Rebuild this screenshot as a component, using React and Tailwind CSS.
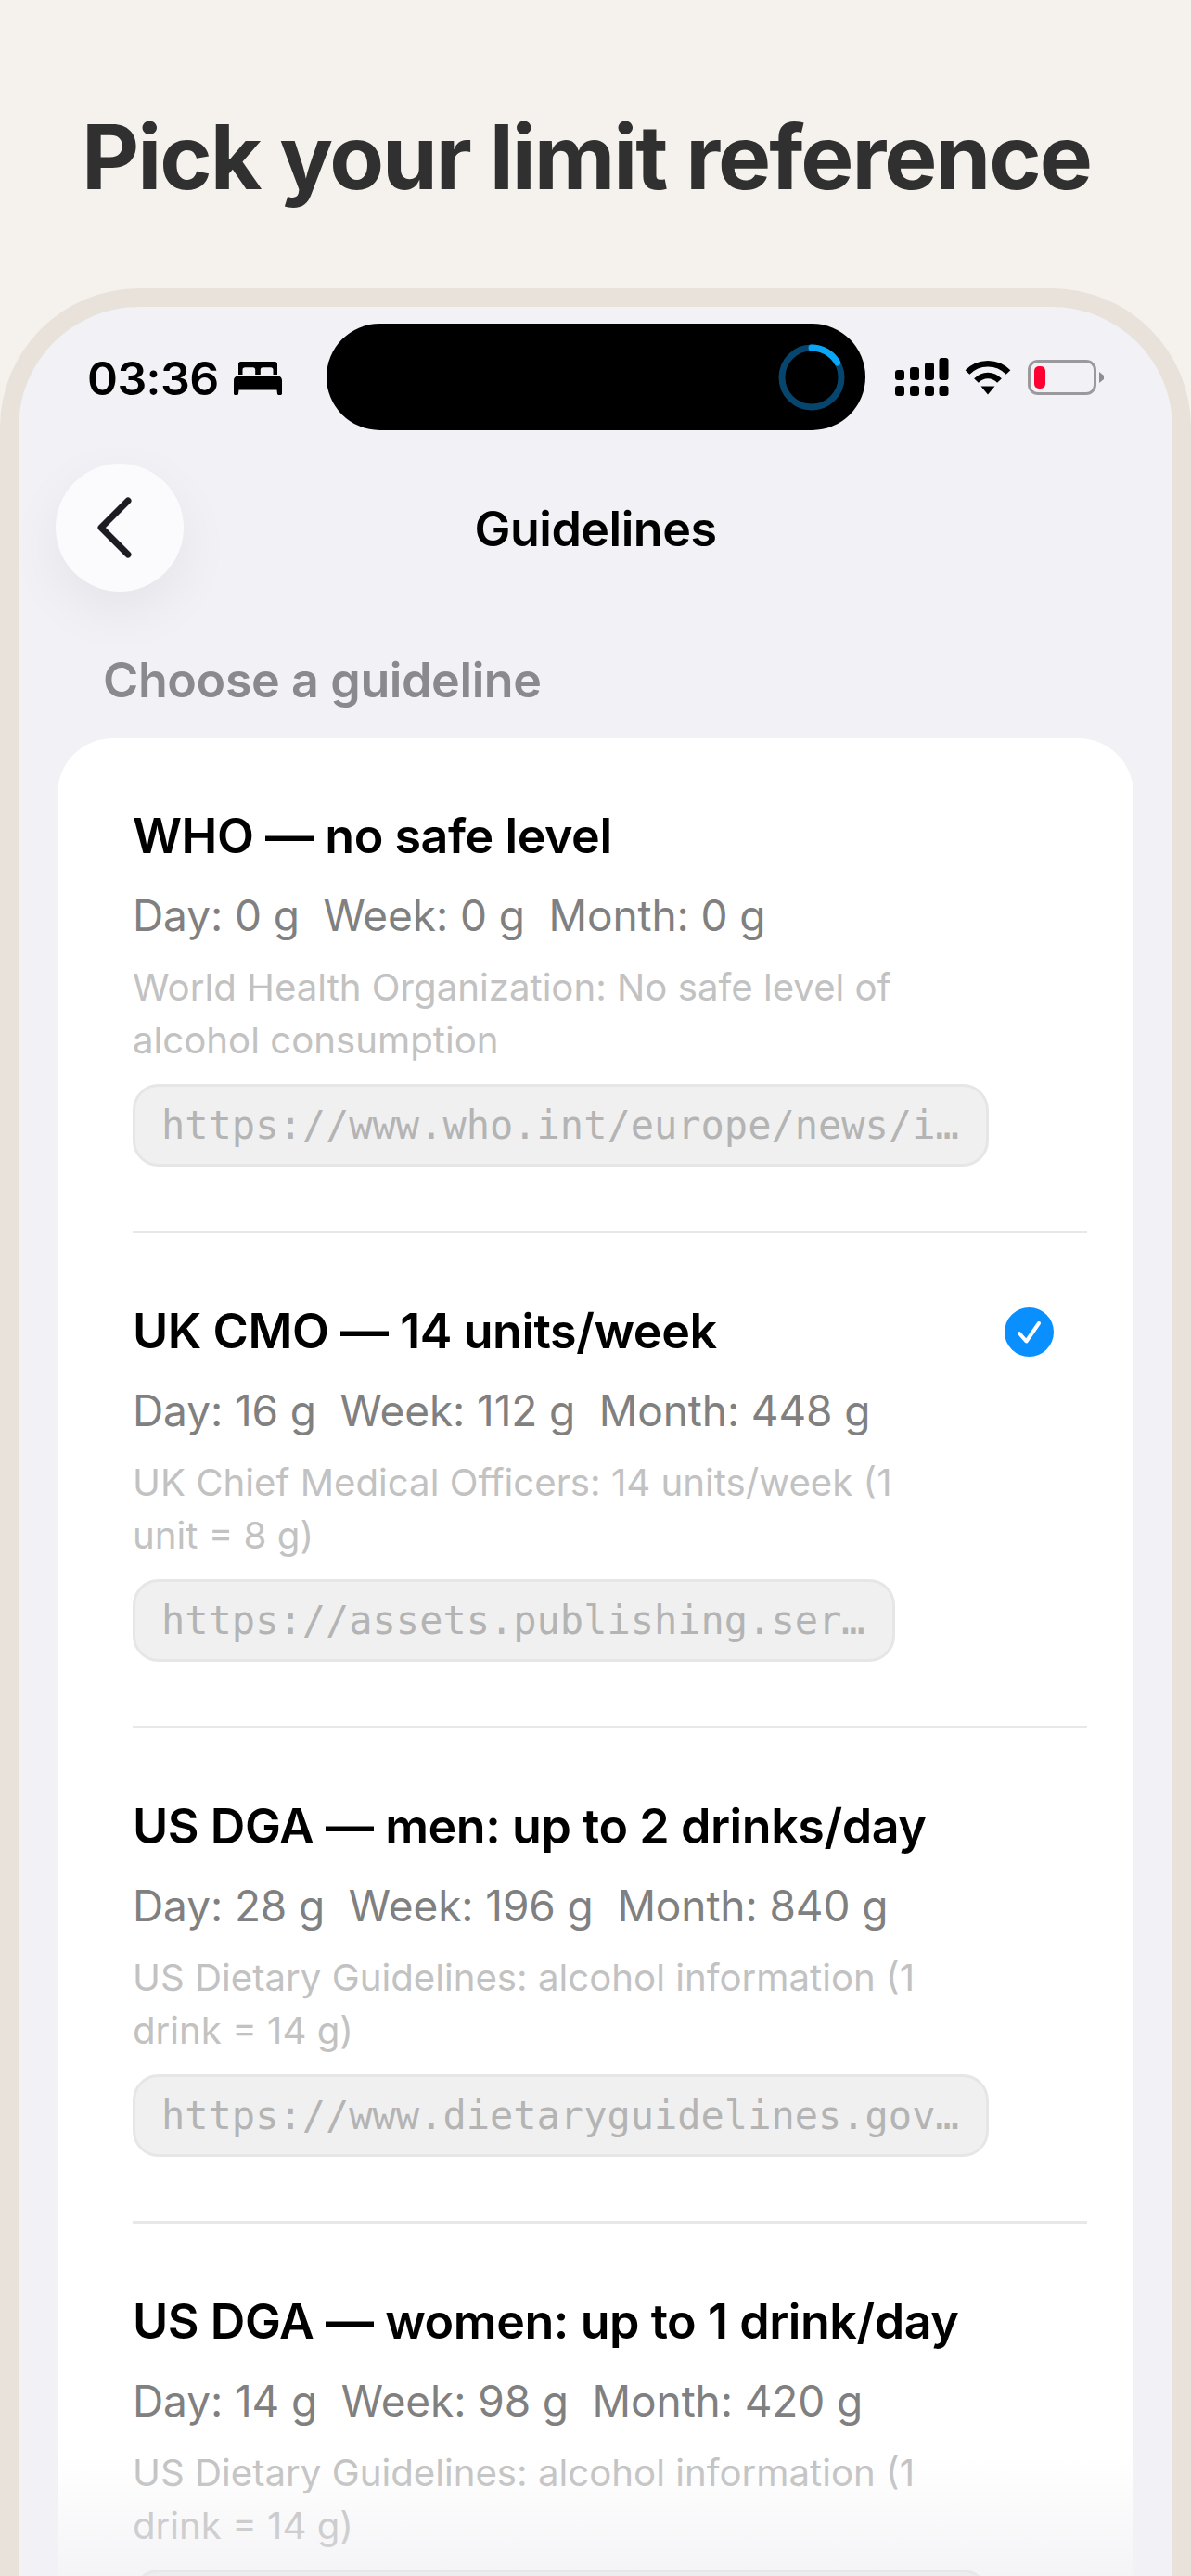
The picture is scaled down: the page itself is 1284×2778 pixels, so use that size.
const guidelines = [
	{
		title: "WHO — no safe level",
		stats: "Day: 0 g  Week: 0 g  Month: 0 g",
		desc: ["World Health Organization: No safe level of", "alcohol consumption"],
		url: "https://www.who.int/europe/news/i…",
	},
	{
		title: "UK CMO — 14 units/week",
		stats: "Day: 16 g  Week: 112 g  Month: 448 g",
		desc: ["UK Chief Medical Officers: 14 units/week (1", "unit = 8 g)"],
		url: "https://assets.publishing.ser…",
		selected: true,
	},
	{
		title: "US DGA — men: up to 2 drinks/day",
		stats: "Day: 28 g  Week: 196 g  Month: 840 g",
		desc: ["US Dietary Guidelines: alcohol information (1", "drink = 14 g)"],
		url: "https://www.dietaryguidelines.gov…",
	},
	{
		title: "US DGA — women: up to 1 drink/day",
		stats: "Day: 14 g  Week: 98 g  Month: 420 g",
		desc: ["US Dietary Guidelines: alcohol information (1", "drink = 14 g)"],
		url: "https://www.dietaryguidelines.gov…",
	},
];

function BedIcon() {
	return (
		<svg width="52" height="36" viewBox="0 0 52 36" fill="#000">
			<path d="M5 2.500C5 1 6.200 0 7.600 0h36.800C45.800 0 47 1 47 2.500V14h-4.500V8.800c0-1.600-1-2.600-2.600-2.600h-8.600c-1.600 0-2.500 1-2.500 2.600V14h-5.600V8.800c0-1.600-1-2.600-2.500-2.600h-8.600c-1.600 0-2.600 1-2.600 2.600V14H5z" />
			<path d="M4.500 15.500h43c2.400 0 4.500 1.800 4.500 4.500v14.600c0 .8-.6 1.400-1.400 1.400h-2.200c-.8 0-1.300-.5-1.400-1.200l-.5-4.300H5.500L5 34.800c-.1.700-.6 1.200-1.400 1.200H1.400C.6 36 0 35.400 0 34.600V20c0-2.700 2.100-4.500 4.500-4.500z" />
		</svg>
	);
}

function SignalIcon() {
	return (
		<svg width="58" height="42" viewBox="0 0 58 42" fill="#000">
			<rect x="0" y="13" width="10" height="11" rx="3" />
			<rect x="16" y="10" width="10" height="14" rx="3" />
			<rect x="32" y="5" width="10" height="19" rx="3" />
			<rect x="47.500" y="0" width="10" height="24" rx="3" />
			<rect x="0" y="30" width="10" height="11" rx="3" />
			<rect x="16" y="30" width="10" height="11" rx="3" />
			<rect x="32" y="30" width="10" height="11" rx="3" />
			<rect x="47.500" y="30" width="10" height="11" rx="3" />
		</svg>
	);
}

function WifiIcon() {
	return (
		<svg width="50" height="38" viewBox="0 0 50 38" fill="none" stroke="#000" strokeWidth="6.500">
			<path d="M3 13.500C15 1 35 1 47 13.500" />
			<path d="M12.500 22.500C19.500 15 30.500 15 37.500 22.500" />
			<path d="M17.500 28.500h15L25 37.500z" fill="#000" stroke="none" />
		</svg>
	);
}

function BatteryIcon() {
	return (
		<div className="flex items-center gap-[3px]">
			<div className="flex h-[38px] w-[74px] items-center rounded-[11px] border-[3px] border-[#9a9a9c] pl-[4px]">
				<div className="h-[24px] w-[12px] rounded-[5px] bg-[#ff0033]" />
			</div>
			<svg width="5" height="12" viewBox="0 0 5 12" fill="#8e8e90">
				<path d="M0 0l5 4v4l-5 4z" />
			</svg>
		</div>
	);
}

function StatusBar() {
	return (
		<div className="relative flex h-[115px] items-center">
			<div className="flex w-[332px] items-center pl-[74px] pt-[2px]">
				<span className="text-[50px] font-semibold leading-none text-black tracking-[-0.6px]">03:36</span>
				<div className="ml-[16px]">
					<BedIcon />
				</div>
			</div>
			<div className="flex h-[115px] w-[581px] items-center justify-end rounded-[58px] bg-black pr-[22px]">
				<svg width="72" height="72" viewBox="0 0 72 72" fill="none">
					<circle cx="36" cy="36" r="32" stroke="#06466e" strokeWidth="7" />
					<path d="M36 4A32 32 0 0 1 63.700 20" stroke="#0aa5f5" strokeWidth="7" strokeLinecap="round" />
				</svg>
			</div>
			<div className="ml-[32px] flex items-center gap-[17px]">
				<SignalIcon />
				<WifiIcon />
				<div className="ml-[1px]">
					<BatteryIcon />
				</div>
			</div>
		</div>
	);
}

function Row({ item, last }) {
	return (
		<div className={last ? "pt-[74px]" : "border-b-[3px] border-[#e8e8e8] pb-[69px] pt-[74px]"}>
			<div className="flex items-center justify-between pr-[36px]">
				<div className="text-[52px] font-semibold leading-[64px] tracking-[-0.45px] text-black">{item.title}</div>
				{item.selected && (
					<div className="flex h-[53px] w-[53px] items-center justify-center rounded-full bg-[#0a8fff]">
						<svg width="30" height="30" viewBox="0 0 30 30" fill="none" stroke="#fff" strokeWidth="4" strokeLinecap="round" strokeLinejoin="round">
							<path d="M4 17l7.500 8.500L25 6" />
						</svg>
					</div>
				)}
			</div>
			<div className="mt-[21px] whitespace-pre text-[46px] leading-[64px] tracking-[-0.1px] text-[#808080]">{item.stats}</div>
			<div className="mt-[17px] text-[40.200px] leading-[57px] text-[#c2c2c2]">
				{item.desc.map((line) => (
					<div key={line}>{line}</div>
				))}
			</div>
			<div className="mt-[19px] inline-flex h-[89px] items-center rounded-[28px] border-[3px] border-[#e6e6e6] bg-[#f0f0f0] pl-[28px] pr-[29px]">
				<span className="font-['DejaVu_Sans_Mono',monospace] text-[42px] leading-none text-[#b4b4b4]">{item.url}</span>
			</div>
		</div>
	);
}

export default function App() {
	return (
		<div className="flex h-[2778px] w-[1284px] flex-col overflow-hidden bg-[#f5f2ed] font-['Inter',sans-serif]">
			<div className="flex h-[311px] shrink-0 items-start pl-[88px] pt-[113px]">
				<h1 className="text-[96px] font-bold leading-[112px] tracking-[-2px] text-[#303030]">Pick your limit reference</h1>
			</div>
			<div className="relative flex-1 overflow-hidden rounded-t-[150px] border-x-[20px] border-t-[20px] border-[#e8e2db] bg-[#f1f1f6] pt-[18px]">
				<StatusBar />
				<div className="relative mt-[36px] flex h-[138px] items-center justify-center">
					<div className="absolute left-[40px] top-0 flex h-[138px] w-[138px] items-center justify-center rounded-full bg-[#fbfbfe] shadow-[0_20px_60px_rgba(0,0,0,0.06)]">
						<svg width="40" height="66" viewBox="0 0 40 66" fill="none" stroke="#1c1c22" strokeWidth="7" strokeLinecap="round" strokeLinejoin="round" className="mr-[10px]">
							<path d="M34 4L5 33l29 29" />
						</svg>
					</div>
					<div className="pt-[4px] text-[52px] font-semibold tracking-[-0.5px] text-black">Guidelines</div>
				</div>
				<div className="mt-[66px] pl-[91px] text-[52px] font-semibold leading-[60px] tracking-[-0.4px] text-[#8a8a8e]">Choose a guideline</div>
				<div className="mx-[42px] mt-[32px] rounded-t-[60px] bg-white pb-[200px] pl-[81px] pr-[50px]">
					{guidelines.map((item, i) => (
						<Row key={item.title} item={item} last={i === guidelines.length - 1} />
					))}
				</div>
				{/* soft fade over the bottom of the card */}
				<div className="absolute inset-x-[42px] bottom-0 h-[130px] bg-gradient-to-b from-transparent to-[#e9e9ee]/50" />
			</div>
		</div>
	);
}
